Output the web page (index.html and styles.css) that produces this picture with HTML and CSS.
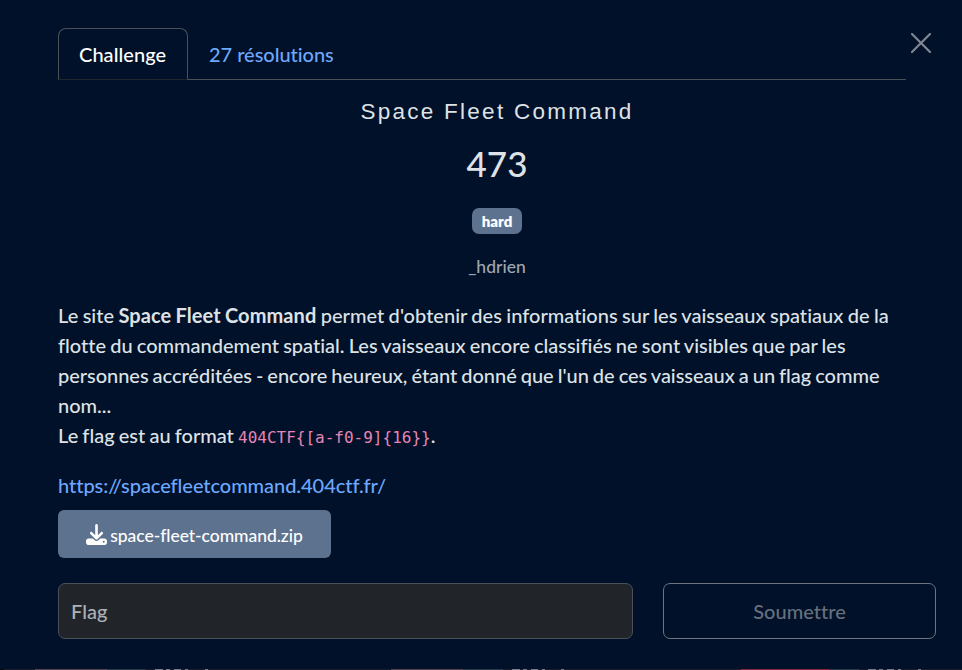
FILE: index.html
```html
<!DOCTYPE html>
<html lang="fr">
<head>
<meta charset="utf-8">
<title>Space Fleet Command</title>
<link rel="stylesheet" href="styles.css">
</head>
<body>
<main class="modal">
  <button class="close" aria-label="Fermer"><svg viewBox="0 0 20 20"><path d="M1 1 19 19M19 1 1 19"/></svg></button>
  <nav class="tabs"><a class="tab active">Challenge</a><a class="tab">27 résolutions</a></nav>
  <h2 class="name">Space Fleet Command</h2>
  <h3 class="value">473</h3>
  <div class="tags"><span class="badge">hard</span></div>
  <div class="author">_hdrien</div>
  <p class="desc"><span class="intro">Le site <strong>Space Fleet Command</strong> permet d'obtenir des informations sur les vaisseaux spatiaux de la</span><br>flotte du commandement spatial. Les vaisseaux encore classifiés ne sont visibles que par les<br><span class="tight">personnes accréditées - encore heureux, étant donné que l'un de ces vaisseaux a un flag comme</span><br>nom...<br>Le flag est au format <code>404CTF{[a-f0-9]{16}}</code>.</p>
  <a class="link">https://spacefleetcommand.404ctf.fr/</a>
  <a class="file"><svg viewBox="0 0 512 512"><path d="M288 32c0-17.700-14.300-32-32-32s-32 14.300-32 32V274.700l-73.400-73.400c-12.500-12.500-32.800-12.500-45.300 0s-12.500 32.800 0 45.300l128 128c12.500 12.500 32.800 12.500 45.300 0l128-128c12.500-12.500 12.500-32.800 0-45.300s-32.800-12.500-45.300 0L288 274.700V32zM64 352c-35.300 0-64 28.700-64 64v32c0 35.300 28.700 64 64 64H448c35.300 0 64-28.700 64-64V416c0-35.300-28.700-64-64-64H346.500l-45.300 45.300c-25 25-65.500 25-90.500 0L165.500 352H64zm368 56a24 24 0 1 1 0 48 24 24 0 1 1 0-48z"/></svg><span>space-fleet-command.zip</span></a>
  <form class="submit"><input class="flag" placeholder="Flag"><button type="button" class="send">Soumettre</button></form>
</main>
<div class="backdrop"></div>
</body>
</html>
```
FILE: styles.css
```css
* { box-sizing: border-box; }
body { margin: 0; height: 670px; overflow: hidden; background: #001129; color: #dee2e6; font: 500 20px/30px Lato, "Liberation Sans", sans-serif; font-variant-ligatures: none; }
.modal { position: relative; height: 669px; padding: 28px 26px 0 58px; }
.close { position: absolute; top: 33px; right: 31px; width: 20px; height: 20px; padding: 0; border: 0; background: none; }
.close svg { display: block; width: 20px; height: 20px; fill: none; stroke: #808895; stroke-width: 2.2; stroke-linecap: round; }
.tabs { display: flex; width: 848px; height: 52px; border-bottom: 1px solid #495057; }
.tab { height: 52px; padding: 10px 20px 11px; border: 1px solid transparent; color: #6ea8fe; letter-spacing: -0.03px; }
.active { width: 130px; border-color: #495057 #495057 #212529; border-radius: 8px 8px 0 0; background: #001129; color: #fff; letter-spacing: 0.05px; }
.name { margin: 18px 0 0; width: 878px; text-align: center; font: 400 22.5px/28px "Liberation Sans", sans-serif; letter-spacing: 2.25px; }
.value { margin: 16px 0 0; width: 878px; text-align: center; font-weight: 500; font-size: 35px; line-height: 42px; }
.tags { display: flex; justify-content: center; width: 878px; margin-top: 24px; }
.badge { width: 50px; height: 26px; border-radius: 7px; background: #5d728f; color: #fff; text-align: center; font-weight: 800; font-size: 15px; line-height: 27px; }
.author { margin-top: 18px; width: 878px; text-align: center; font-size: 17.5px; color: #a0a7b1; }
.desc { margin: 18px 0 20px; white-space: nowrap; word-spacing: -0.9px; }
.intro { word-spacing: -0.7px; letter-spacing: 0.02px; }
.intro strong { letter-spacing: 0.08px; }
.tight { letter-spacing: -0.03px; word-spacing: -1px; }
code { font: 16px "DejaVu Sans Mono", monospace; word-spacing: 0; color: #e685b5; }
.link { display: block; color: #6ea8fe; letter-spacing: -0.05px; }
.file { display: flex; align-items: center; justify-content: center; gap: 3px; width: 273px; height: 48px; margin-top: 10px; border-radius: 6px; background: #5d728f; color: #fff; font-size: 17.5px; }
.file svg { width: 21px; height: 21px; fill: #fff; }
.file span { padding-top: 4px; letter-spacing: -0.04px; }
.submit { display: flex; gap: 30px; margin-top: 25px; }
.flag, .send { height: 56px; border-radius: 7px; font: inherit; }
.flag { width: 575px; padding: 0 12px; border: 1px solid #495057; background: #212529; }
.flag::placeholder { color: #adb1b5; opacity: 1; }
.send { width: 273px; border: 1px solid #6c757d; background: transparent; color: #66707d; }
.backdrop { height: 1px; background: linear-gradient(90deg, #08080d 4px, #1b1c2b 4px 35px, #554352 35px 107px, #283849 107px 146px, #1b1c2b 146px 155px, #777b8b 155px 163px, #1b1c2b 163px 166px, #777b8b 166px 170px, #1b1c2b 170px 174px, #777b8b 174px 181px, #1b1c2b 181px 185px, #777b8b 185px 188px, #1b1c2b 188px 205px, #777b8b 205px 208px, #1b1c2b 208px 391px, #554352 391px 463px, #283849 463px 503px, #1b1c2b 503px 512px, #777b8b 512px 520px, #1b1c2b 520px 523px, #777b8b 523px 527px, #1b1c2b 527px 531px, #777b8b 531px 538px, #1b1c2b 538px 542px, #777b8b 542px 545px, #1b1c2b 545px 561px, #777b8b 561px 564px, #1b1c2b 564px 741px, #842a3b 741px 829px, #283849 829px 859px, #1b1c2b 859px 868px, #777b8b 868px 876px, #1b1c2b 876px 879px, #777b8b 879px 883px, #1b1c2b 883px 887px, #777b8b 887px 894px, #1b1c2b 894px 898px, #777b8b 898px 901px, #1b1c2b 901px 918px, #777b8b 918px 921px, #1b1c2b 921px); }
```
